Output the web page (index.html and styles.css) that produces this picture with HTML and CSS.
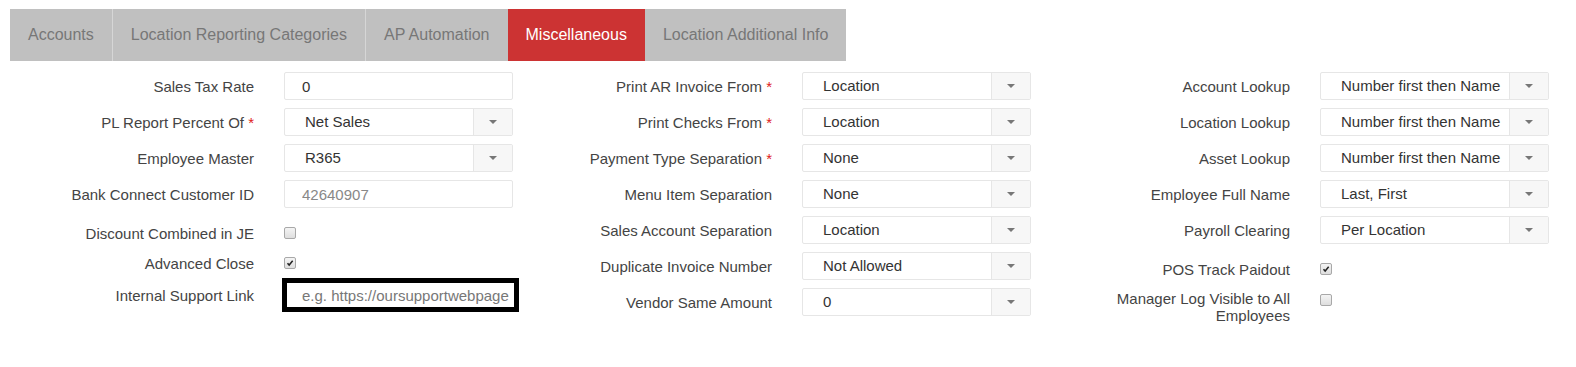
FILE: index.html
```html
<!DOCTYPE html>
<html lang="en">

<head>
    <meta charset="UTF-8">
    <meta name="viewport" content="width=device-width, initial-scale=1.0">
    <title>Location Settings</title>
    <link rel="stylesheet" href="styles.css">
</head>

<body>
    <div id="tabs">
        <a href="#" class="tab">Accounts</a>
        <a href="#" class="tab">Location Reporting Categories</a>
        <a href="#" class="tab">AP Automation</a>
        <a href="#" class="tab active">Miscellaneous</a>
        <a href="#" class="tab">Location Additional Info</a>
    </div>

    <div id="form">
        <!-- left column -->
        <div class="col">
            <div class="row">
                <label>Sales Tax Rate</label>
                <div class="field"><input class="text" type="text" value="0"></div>
            </div>
            <div class="row">
                <label>PL Report Percent Of <span class="req">*</span></label>
                <div class="field"><div class="select"><span>Net Sales</span><b class="arrow"></b></div></div>
            </div>
            <div class="row">
                <label>Employee Master</label>
                <div class="field"><div class="select"><span>R365</span><b class="arrow"></b></div></div>
            </div>
            <div class="row">
                <label>Bank Connect Customer ID</label>
                <div class="field"><input class="text readonly" type="text" value="42640907" readonly></div>
            </div>
            <div class="row check-row first-check">
                <label>Discount Combined in JE</label>
                <div class="field"><span class="check"></span></div>
            </div>
            <div class="row check-row">
                <label>Advanced Close</label>
                <div class="field"><span class="check on"><svg viewBox="0 0 12 12"><path d="M3 6.2 L5 8.4 L9.2 3.4" /></svg></span></div>
            </div>
            <div class="row check-row">
                <label>Internal Support Link</label>
                <div class="field"><input class="text marked" type="text" placeholder="e.g. https://oursupportwebpage"></div>
            </div>
        </div>

        <!-- middle column -->
        <div class="col">
            <div class="row">
                <label>Print AR Invoice From <span class="req">*</span></label>
                <div class="field"><div class="select"><span>Location</span><b class="arrow"></b></div></div>
            </div>
            <div class="row">
                <label>Print Checks From <span class="req">*</span></label>
                <div class="field"><div class="select"><span>Location</span><b class="arrow"></b></div></div>
            </div>
            <div class="row">
                <label>Payment Type Separation <span class="req">*</span></label>
                <div class="field"><div class="select"><span>None</span><b class="arrow"></b></div></div>
            </div>
            <div class="row">
                <label>Menu Item Separation</label>
                <div class="field"><div class="select"><span>None</span><b class="arrow"></b></div></div>
            </div>
            <div class="row">
                <label>Sales Account Separation</label>
                <div class="field"><div class="select"><span>Location</span><b class="arrow"></b></div></div>
            </div>
            <div class="row">
                <label>Duplicate Invoice Number</label>
                <div class="field"><div class="select"><span>Not Allowed</span><b class="arrow"></b></div></div>
            </div>
            <div class="row">
                <label>Vendor Same Amount</label>
                <div class="field"><div class="select"><span>0</span><b class="arrow"></b></div></div>
            </div>
        </div>

        <!-- right column -->
        <div class="col">
            <div class="row">
                <label>Account Lookup</label>
                <div class="field"><div class="select"><span>Number first then Name</span><b class="arrow"></b></div></div>
            </div>
            <div class="row">
                <label>Location Lookup</label>
                <div class="field"><div class="select"><span>Number first then Name</span><b class="arrow"></b></div></div>
            </div>
            <div class="row">
                <label>Asset Lookup</label>
                <div class="field"><div class="select"><span>Number first then Name</span><b class="arrow"></b></div></div>
            </div>
            <div class="row">
                <label>Employee Full Name</label>
                <div class="field"><div class="select"><span>Last, First</span><b class="arrow"></b></div></div>
            </div>
            <div class="row">
                <label>Payroll Clearing</label>
                <div class="field"><div class="select"><span>Per Location</span><b class="arrow"></b></div></div>
            </div>
            <div class="row check-row first-check">
                <label>POS Track Paidout</label>
                <div class="field"><span class="check on"><svg viewBox="0 0 12 12"><path d="M3 6.2 L5 8.4 L9.2 3.4" /></svg></span></div>
            </div>
            <div class="row tall">
                <label>Manager Log Visible to All Employees</label>
                <div class="field"><span class="check"></span></div>
            </div>
        </div>
    </div>
</body>

</html>
```

FILE: styles.css
```css
body {
    margin: 0;
    font-family: Arial, "Liberation Sans", sans-serif;
    color: #333;
    background: #fff;
}

#tabs {
    display: flex;
    margin: 9px 0 0 10px;
    width: fit-content;
    background-color: #c0c0c0;
}

.tab {
    height: 52px;
    line-height: 52px;
    padding: 0 18px;
    font-size: 16px;
    color: #777;
    text-decoration: none;
    border-left: 1px solid #d6d6d6;
}

.tab:first-child {
    border-left: none;
}

.tab.active {
    background-color: #cc3333;
    color: #fff;
    border-left: none;
}

.tab.active + .tab {
    border-left: none;
}

#form {
    display: grid;
    grid-template-columns: repeat(3, 518px);
    margin: 7px 0 0 10px;
}

.row {
    display: grid;
    grid-template-columns: 1fr 1fr;
    align-items: center;
    height: 36px;
}

.row label {
    padding: 0 15px;
    text-align: right;
    font-size: 15px;
    line-height: 17px;
    color: #444;
}

.req {
    color: #e02020;
}

.field {
    padding: 0 15px;
    display: flex;
    align-items: center;
}

.check-row {
    height: 30px;
}

.first-check {
    margin-top: 6px;
}

.tall {
    height: 44px;
    margin-top: 2px;
    align-items: start;
}

.tall label {
    padding-top: 4px;
}

.tall .field {
    padding-top: 8px;
}

.text {
    box-sizing: border-box;
    width: 100%;
    height: 28px;
    padding: 0 17px;
    border: 1px solid #e6e6e6;
    border-radius: 2px;
    font-family: inherit;
    font-size: 15px;
    color: #333;
    outline: none;
}

.text.readonly {
    color: #888;
}

.text::placeholder {
    color: #777;
}

.text.marked {
    flex-shrink: 0;
    height: 34px;
    width: calc(100% + 8px);
    margin-left: -2px;
    border: 5px solid #000;
    border-radius: 0;
    padding: 0 0 0 15px;
}

.select {
    box-sizing: border-box;
    width: 100%;
    height: 28px;
    display: flex;
    border: 1px solid #e6e6e6;
    border-radius: 2px;
    font-size: 15px;
}

.select span {
    flex: 1;
    line-height: 26px;
    padding-left: 20px;
    color: #333;
    white-space: nowrap;
    overflow: hidden;
}

.arrow {
    width: 38px;
    border-left: 1px solid #e6e6e6;
    background-color: #f7f7f7;
    position: relative;
}

.arrow::after {
    content: "";
    position: absolute;
    left: 15px;
    top: 11px;
    border-left: 4px solid transparent;
    border-right: 4px solid transparent;
    border-top: 4px solid #777;
}

.check {
    box-sizing: border-box;
    width: 12px;
    height: 12px;
    border: 1px solid #a8a8a8;
    border-radius: 2px;
    background: linear-gradient(#f4f4f4, #dedede);
    display: inline-flex;
}

.check svg {
    width: 10px;
    height: 10px;
}

.check path {
    fill: none;
    stroke: #222;
    stroke-width: 1.8;
}
```
